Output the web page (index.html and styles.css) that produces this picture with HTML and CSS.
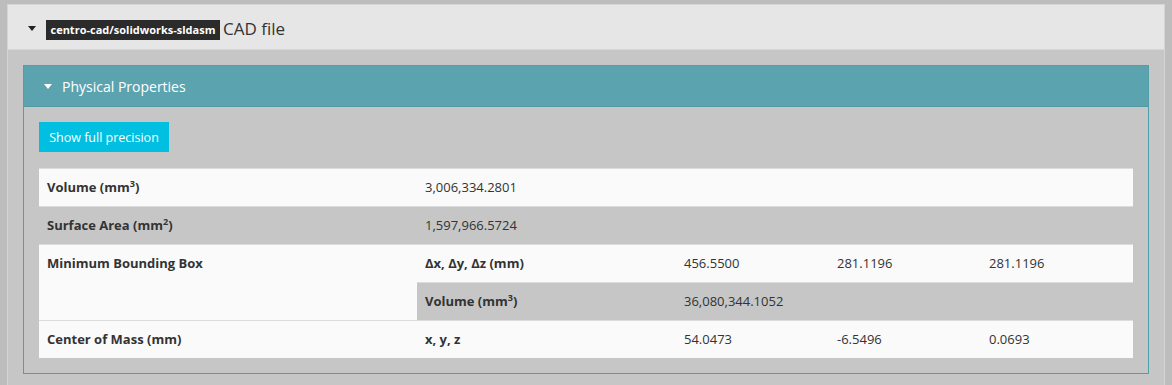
FILE: index.html
```html
<!DOCTYPE html>
<html>
<head>
<meta charset="utf-8">
<link rel="stylesheet" href="styles.css">
</head>
<body>
<div class="panel">
  <div class="panel-head">
    <span class="caret caret-dark"></span>
    <span class="badge">centro-cad/solidworks-sldasm</span>
    <span class="title">CAD file</span>
  </div>
  <div class="panel-body">
    <div class="box">
      <div class="box-head">
        <span class="caret caret-light"></span>
        <span>Physical Properties</span>
      </div>
      <div class="box-body">
        <button class="btn">Show full precision</button>
        <table class="props">
          <colgroup>
            <col class="c1"><col class="c2"><col class="c3"><col class="c4"><col class="c5">
          </colgroup>
          <tr class="light">
            <th>Volume (mm<sup>3</sup>)</th>
            <td colspan="4">3,006,334.2801</td>
          </tr>
          <tr>
            <th>Surface Area (mm<sup>2</sup>)</th>
            <td colspan="4">1,597,966.5724</td>
          </tr>
          <tr class="light">
            <th rowspan="2" class="span">Minimum Bounding Box</th>
            <th>Δx, Δy, Δz (mm)</th>
            <td>456.5500</td>
            <td>281.1196</td>
            <td>281.1196</td>
          </tr>
          <tr>
            <th>Volume (mm<sup>3</sup>)</th>
            <td colspan="3">36,080,344.1052</td>
          </tr>
          <tr class="light">
            <th>Center of Mass (mm)</th>
            <th>x, y, z</th>
            <td>54.0473</td>
            <td>-6.5496</td>
            <td>0.0693</td>
          </tr>
        </table>
      </div>
    </div>
  </div>
</div>
</body>
</html>
```

FILE: styles.css
```css
html, body {
  margin: 0;
  height: 385px;
  overflow: hidden;
}
body {
  background: #bdbdbd;
  padding: 4px 7px 0 7px;
  box-sizing: border-box;
  font-family: "Open Sans", "Noto Sans", sans-serif;
  color: #333;
}
.panel {
  border: 1px solid #d5d5d5;
  border-bottom: none;
  background: #c6c6c6;
}
.panel-head {
  background: #e6e6e6;
  border-bottom: 1px solid #d8d8d8;
  height: 20px;
  padding: 15px 20px 9px 20px;
  display: flex;
  align-items: center;
}
.caret {
  width: 0;
  height: 0;
  border-left: 4px solid transparent;
  border-right: 4px solid transparent;
  flex: none;
}
.caret-dark {
  border-top: 5px solid #222;
  margin-top: -3px;
}
.caret-light {
  border-top: 5px solid #fff;
}
.badge {
  margin-left: 10px;
  background: #2b2b2b;
  color: #fff;
  font-weight: 700;
  font-size: 11px;
  height: 20px;
  line-height: 20px;
  width: 174px;
  text-align: center;
  box-sizing: border-box;
  white-space: nowrap;
}
.title {
  margin-left: 3px;
  font-size: 17px;
  margin-top: -3px;
}
.panel-body {
  padding: 15px 15px 15px 15px;
}
.box {
  border: 1px solid #4fa0a8;
}
.box-head {
  background: #5ca3b0;
  border-bottom: 1px solid #52999f;
  height: 40px;
  padding-left: 20px;
  display: flex;
  align-items: center;
  color: #fff;
  font-size: 14px;
}
.box-head .caret {
  margin-right: 10px;
  margin-top: 1px;
}
.box-body {
  padding: 15px;
}
.btn {
  display: block;
  border: none;
  background: #00bfe1;
  color: #fff;
  font-family: inherit;
  font-size: 12.5px;
  width: 130px;
  height: 30px;
  padding: 0;
  margin: 0 0 16px 0;
}
.props {
  width: 100%;
  border-collapse: collapse;
  table-layout: fixed;
  font-size: 13px;
}
.c1 { width: 378px; }
.c2 { width: 259px; }
.c3 { width: 153px; }
.c4 { width: 152px; }
.c5 { width: 152px; }
.props th, .props td {
  text-align: left;
  vertical-align: top;
  padding: 8px;
  line-height: 21px;
  border-top: 1px solid #dcdcdc;
  white-space: nowrap;
}
.props th {
  font-weight: 700;
}
.props tr.light > * {
  background: #fafafa;
}
.props sup {
  font-size: 70%;
  line-height: 0;
  vertical-align: 5px;
}
```
